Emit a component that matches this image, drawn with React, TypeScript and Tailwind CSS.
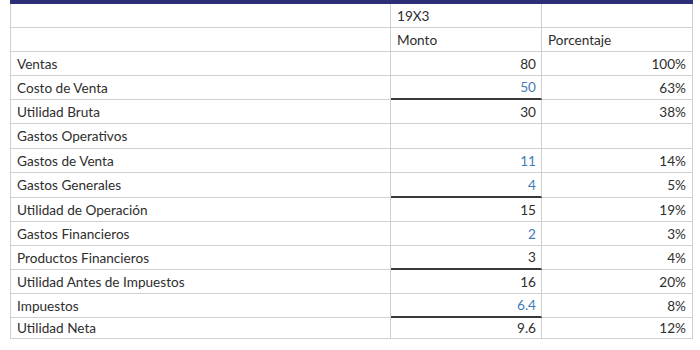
const rows: { label: string; monto: string; pct: string; blue?: boolean; rule?: boolean; h?: string }[] = [
  { label: "Ventas", monto: "80", pct: "100%" },
  { label: "Costo de Venta", monto: "50", pct: "63%", blue: true, rule: true },
  { label: "Utilidad Bruta", monto: "30", pct: "38%" },
  { label: "Gastos Operativos", monto: "", pct: "", h: "h-[25px]" },
  { label: "Gastos de Venta", monto: "11", pct: "14%", blue: true },
  { label: "Gastos Generales", monto: "4", pct: "5%", blue: true, rule: true, h: "h-[25px]" },
  { label: "Utilidad de Operación", monto: "15", pct: "19%" },
  { label: "Gastos Financieros", monto: "2", pct: "3%", blue: true },
  { label: "Productos Financieros", monto: "3", pct: "4%", rule: true },
  { label: "Utilidad Antes de Impuestos", monto: "16", pct: "20%" },
  { label: "Impuestos", monto: "6.4", pct: "8%", blue: true, rule: true },
  { label: "Utilidad Neta", monto: "9.6", pct: "12%", h: "h-[21px]" },
];

export default function App() {
  return (
    <div className="w-[700px] h-[350px] bg-white font-['Lato',sans-serif] text-[13.6px] text-[#2e2e2e]">
      <div className="ml-[10px] w-[683px]">
        {/* top bar */}
        <div className="h-[4px] bg-[#2c2f78]" />

        {/* header rows */}
        <div className="flex h-[24px] border-l border-[#d0d0d0]">
          <div className="w-[380px] border-r border-b border-[#d0d0d0]" />
          <div className="w-[151px] border-r border-b border-[#d0d0d0] flex items-center pl-[6px] pt-[1px]">19X3</div>
          <div className="w-[151px] border-r border-b border-[#d0d0d0]" />
        </div>
        <div className="flex h-[24px] border-l border-[#d0d0d0]">
          <div className="w-[380px] border-r border-b border-[#d0d0d0]" />
          <div className="w-[151px] border-r border-b border-[#d0d0d0] flex items-center pl-[6px] pt-[1px]">Monto</div>
          <div className="w-[151px] border-r border-b border-[#d0d0d0] flex items-center pl-[6px] pt-[1px]">Porcentaje</div>
        </div>

        {rows.map((r) => (
          <div key={r.label} className={`flex border-l border-[#d0d0d0] ${r.h ?? "h-[24px]"}`}>
            <div className="w-[380px] border-r border-b border-[#d0d0d0] flex items-center pl-[6px] pt-[1px]">{r.label}</div>
            <div
              className={`w-[151px] border-r border-[#d0d0d0] flex items-center justify-end pr-[5px] pt-[1px] ${
                r.rule ? "border-b-2 border-b-[#3a3a3a]" : "border-b"
              } ${r.blue ? "text-[#3f7cb8]" : ""}`}
            >
              {r.monto}
            </div>
            <div className="w-[151px] border-r border-b border-[#d0d0d0] flex items-center justify-end pr-[6px] pt-[1px]">{r.pct}</div>
          </div>
        ))}
      </div>
    </div>
  );
}
